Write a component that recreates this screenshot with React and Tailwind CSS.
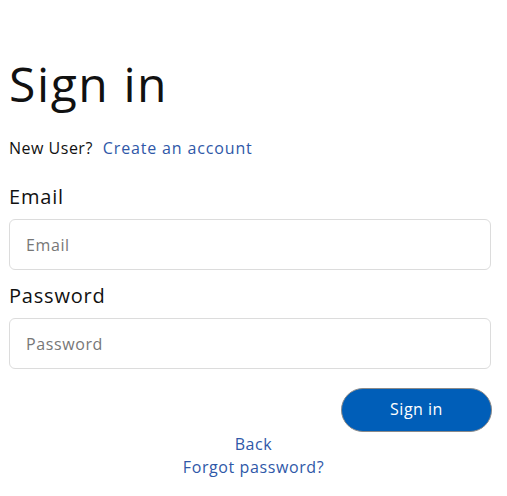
export default function App() {
  return (
    <div className="w-[507px] min-h-[496px] bg-white text-[#111111]" style={{ fontFamily: '"Open Sans", "Noto Sans", sans-serif' }}>
      <div className="pl-[9px] w-[491px]">
        <h1 className="pt-[56px] text-[48px] leading-[56px] font-normal tracking-[1.6px]">Sign in</h1>
        <div className="mt-[24px] flex items-center text-[16px] leading-[24px] tracking-[0.5px]">
          <span>New User?</span>
          <a className="ml-[10px] text-[#2f58a8] tracking-[0.85px]">Create an account</a>
        </div>
        <label className="block mt-[23px] text-[20px] leading-[28px] tracking-[0.8px]">Email</label>
        <input
          className="mt-[8px] block w-full h-[51px] rounded-[6px] border border-[#dcdcdc] px-[16px] text-[16px] tracking-[0.6px] placeholder:text-[#777777] outline-none"
          placeholder="Email"
        />
        <label className="block mt-[12px] text-[20px] leading-[28px] tracking-[0.8px]">Password</label>
        <input
          type="password"
          className="mt-[8px] block w-full h-[51px] rounded-[6px] border border-[#dcdcdc] px-[16px] text-[16px] tracking-[0.6px] placeholder:text-[#777777] outline-none"
          placeholder="Password"
        />
        <div className="mt-[19px] flex justify-end mr-[-1px]">
          <button className="w-[151px] h-[44px] pb-[3px] rounded-full bg-[#005eb8] border border-[#8a8a8a] text-white text-[16px] font-medium tracking-[0.5px]">
            Sign in
          </button>
        </div>
      </div>
      <div className="mt-[1px] flex flex-col items-center text-[16px] leading-[23px] tracking-[0.6px] text-[#2f58a8]">
        <a>Back</a>
        <a>Forgot password?</a>
      </div>
    </div>
  );
}
